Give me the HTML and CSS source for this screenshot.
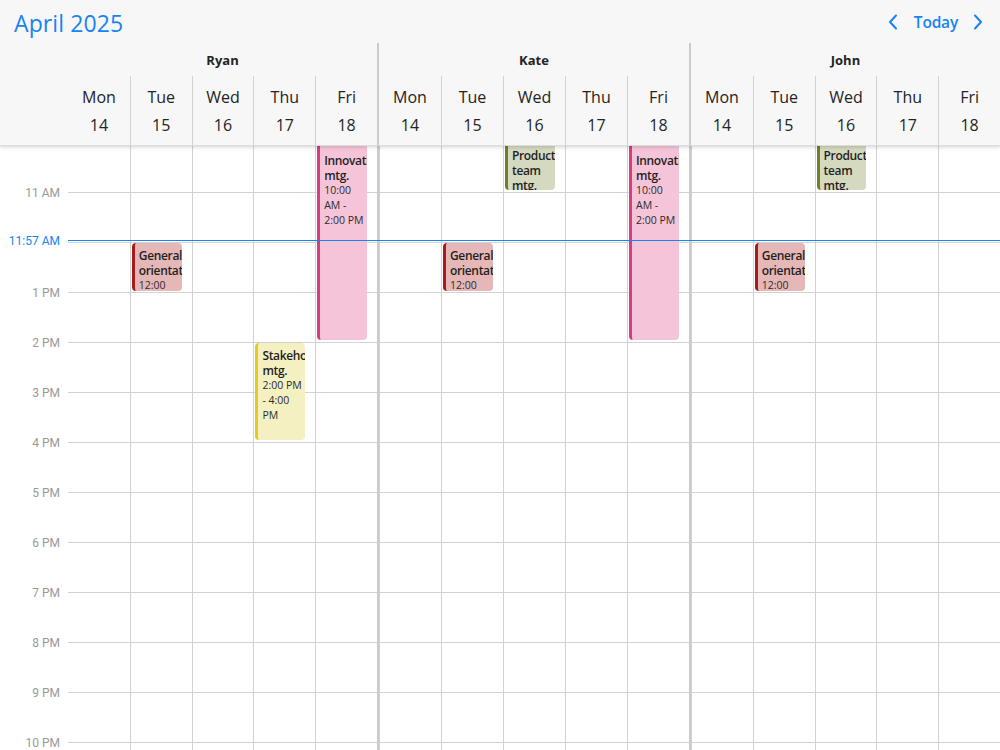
FILE: index.html
```html
<!DOCTYPE html>
<html lang="en">
<head>
<meta charset="utf-8">
<title>Scheduler</title>
<link rel="stylesheet" href="styles.css">
</head>
<body>
<div class="scheduler">
  <header class="header">
    <div class="toolbar">
      <div class="title">April 2025</div>
      <div class="nav">
        <button class="nav-btn" aria-label="Previous">
          <svg width="12" height="16" viewBox="0 0 12 16"><path d="M9 1.5 L3 8 L9 14.5" fill="none" stroke="currentColor" stroke-width="2" stroke-linecap="round" stroke-linejoin="round"/></svg>
        </button>
        <button class="today">Today</button>
        <button class="nav-btn" aria-label="Next">
          <svg width="12" height="16" viewBox="0 0 12 16"><path d="M3 1.5 L9 8 L3 14.5" fill="none" stroke="currentColor" stroke-width="2" stroke-linecap="round" stroke-linejoin="round"/></svg>
        </button>
      </div>
    </div>
    <div class="head-grid">
      <div class="corner"></div>
      <div class="group first">
        <div class="group-name">Ryan</div>
        <div class="days">
          <div class="day"><span>Mon</span><span>14</span></div>
          <div class="day"><span>Tue</span><span>15</span></div>
          <div class="day"><span>Wed</span><span>16</span></div>
          <div class="day"><span>Thu</span><span>17</span></div>
          <div class="day"><span>Fri</span><span>18</span></div>
        </div>
      </div>
      <div class="group">
        <div class="group-name">Kate</div>
        <div class="days">
          <div class="day"><span>Mon</span><span>14</span></div>
          <div class="day"><span>Tue</span><span>15</span></div>
          <div class="day"><span>Wed</span><span>16</span></div>
          <div class="day"><span>Thu</span><span>17</span></div>
          <div class="day"><span>Fri</span><span>18</span></div>
        </div>
      </div>
      <div class="group">
        <div class="group-name">John</div>
        <div class="days">
          <div class="day"><span>Mon</span><span>14</span></div>
          <div class="day"><span>Tue</span><span>15</span></div>
          <div class="day"><span>Wed</span><span>16</span></div>
          <div class="day"><span>Thu</span><span>17</span></div>
          <div class="day"><span>Fri</span><span>18</span></div>
        </div>
      </div>
    </div>
  </header>

  <main class="body">
    <div class="body-inner">
      <div class="times">
        <div class="hour"><span>11 AM</span></div>
        <div class="hour"><span class="hidden">12 PM</span></div>
        <div class="hour"><span>1 PM</span></div>
        <div class="hour"><span>2 PM</span></div>
        <div class="hour"><span>3 PM</span></div>
        <div class="hour"><span>4 PM</span></div>
        <div class="hour"><span>5 PM</span></div>
        <div class="hour"><span>6 PM</span></div>
        <div class="hour"><span>7 PM</span></div>
        <div class="hour"><span>8 PM</span></div>
        <div class="hour"><span>9 PM</span></div>
        <div class="hour"><span>10 PM</span></div>
        <div class="hour"><span>11 PM</span></div>
      </div>

      <div class="bgroup first">
        <div class="col"></div>
        <div class="col">
          <div class="appt red" style="top:100px;height:48px"><div class="a-title">General orientation</div><div class="a-time">12:00 PM - 1:00 PM</div></div>
        </div>
        <div class="col"></div>
        <div class="col">
          <div class="appt yellow" style="top:200px;height:97px"><div class="a-title">Stakeholder mtg.</div><div class="a-time">2:00 PM - 4:00 PM</div></div>
        </div>
        <div class="col">
          <div class="appt pink tall" style="top:0px;height:197px"><div class="a-title">Innovation mtg.</div><div class="a-time">10:00 AM - 2:00 PM</div></div>
        </div>
      </div>

      <div class="bgroup">
        <div class="col"></div>
        <div class="col">
          <div class="appt red" style="top:100px;height:48px"><div class="a-title">General orientation</div><div class="a-time">12:00 PM - 1:00 PM</div></div>
        </div>
        <div class="col">
          <div class="appt olive" style="top:0px;height:47px"><div class="a-title">Product team mtg.</div><div class="a-time">10:00 AM - 11:00 AM</div></div>
        </div>
        <div class="col"></div>
        <div class="col">
          <div class="appt pink tall" style="top:0px;height:197px"><div class="a-title">Innovation mtg.</div><div class="a-time">10:00 AM - 2:00 PM</div></div>
        </div>
      </div>

      <div class="bgroup">
        <div class="col"></div>
        <div class="col">
          <div class="appt red" style="top:100px;height:48px"><div class="a-title">General orientation</div><div class="a-time">12:00 PM - 1:00 PM</div></div>
        </div>
        <div class="col">
          <div class="appt olive" style="top:0px;height:47px"><div class="a-title">Product team mtg.</div><div class="a-time">10:00 AM - 11:00 AM</div></div>
        </div>
        <div class="col"></div>
        <div class="col"></div>
      </div>

      <div class="now-label">11:57 AM</div>
      <div class="now-line"></div>
    </div>
  </main>
</div>
</body>
</html>
```

FILE: styles.css
```css
* { box-sizing: border-box; }

html, body {
  margin: 0;
  padding: 0;
  width: 1000px;
  height: 750px;
  overflow: hidden;
  background: #ffffff;
  font-family: "Open Sans", "Noto Sans", "Liberation Sans", sans-serif;
  color: #242424;
}

.scheduler {
  width: 1000px;
  height: 750px;
  display: flex;
  flex-direction: column;
}

/* ---------- header ---------- */
.header {
  position: relative;
  z-index: 2;
  flex: 0 0 146px;
  background: #f7f7f7;
  box-shadow: 0 1px 4px rgba(0, 0, 0, 0.18);
  border-bottom: 1px solid #dcdcdc;
  display: flex;
  flex-direction: column;
}

.toolbar {
  height: 43px;
  display: flex;
  align-items: center;
  justify-content: space-between;
  padding: 0 14px 0 14px;
}

.title {
  font-size: 23px;
  color: #1784f4;
  letter-spacing: 0.1px;
  margin-top: 2px;
}

.nav {
  display: flex;
  align-items: center;
}

.nav-btn, .today {
  border: 0;
  background: transparent;
  color: #1784f4;
  font-family: inherit;
  padding: 0;
  cursor: pointer;
  display: flex;
  align-items: center;
}

.nav-btn { width: 16px; height: 20px; justify-content: center; }

.today {
  font-size: 15.5px;
  font-weight: 600;
  margin: 0 12px 0 13px;
  letter-spacing: -0.2px;
}

.head-grid {
  flex: 1;
  display: grid;
  grid-template-columns: 68px 309px 312px 311px;
}

.group {
  display: flex;
  flex-direction: column;
  border-left: 2px solid #cbcbcb;
}

.group.first { border-left: 0; }

.group-name {
  height: 33px;
  display: flex;
  align-items: center;
  justify-content: center;
  font-size: 13px;
  font-weight: 700;
  color: #242424;
}

.days {
  flex: 1;
  display: grid;
  grid-template-columns: repeat(5, 1fr);
}

.day {
  display: flex;
  flex-direction: column;
  align-items: center;
  padding-top: 7px;
  font-size: 16px;
  line-height: 28px;
  border-left: 1px solid #d2d2d2;
}

.day:first-child { border-left: 0; }

/* ---------- body ---------- */
.body {
  flex: 1;
  overflow: hidden;
  position: relative;
  z-index: 1;
}

.body-inner {
  position: relative;
  margin-top: -3px;
  display: grid;
  grid-template-columns: 68px 309px 312px 311px;
  height: 650px;
}

.times {
  display: flex;
  flex-direction: column;
}

.hour {
  height: 50px;
  flex: 0 0 50px;
  display: flex;
  align-items: flex-end;
  justify-content: flex-end;
  padding-right: 8px;
  font-family: Roboto, "Open Sans", sans-serif;
  font-size: 12px;
  color: #999999;
}

.hour span {
  line-height: 14px;
  margin-bottom: -7px;
}

.hour .hidden { visibility: hidden; }

.bgroup {
  display: grid;
  grid-template-columns: repeat(5, 1fr);
  border-left: 2px solid #cbcbcb;
}

.bgroup.first { border-left: 0; }

.col {
  position: relative;
  border-left: 1px solid #d2d2d2;
  background-image: repeating-linear-gradient(to bottom, transparent 0, transparent 49px, #d2d2d2 49px, #d2d2d2 50px);
}

.bgroup.first .col:first-child { border-left: 0; }

/* ---------- appointments ---------- */
.appt {
  position: absolute;
  left: 1px;
  width: calc(100% - 11px);
  border-left: 3px solid;
  border-radius: 4px;
  padding: 5px 0 0 4px;
  overflow: hidden;
  color: #1f1f1f;
}

.appt.tall { padding-top: 10px; }

.a-title {
  font-size: 12px;
  font-weight: 600;
  line-height: 15px;
  letter-spacing: -0.35px;
}

.a-time {
  font-size: 10.5px;
  line-height: 15px;
  color: #2b2b2b;
}

.red { background: #e6b7b7; border-left-color: #a61c1c; }
.pink { background: #f5c4d9; border-left-color: #d63f7f; }
.yellow { background: #f5f0c2; border-left-color: #e3cb22; }
.olive { background: #d5d9bf; border-left-color: #717f2d; }

/* ---------- current time ---------- */
.now-line {
  position: absolute;
  left: 68px;
  right: 0;
  top: 97px;
  height: 1px;
  background: #1784f4;
  z-index: 3;
}

.now-label {
  position: absolute;
  left: 0;
  width: 60px;
  top: 91px;
  text-align: right;
  font-family: Roboto, "Open Sans", sans-serif;
  font-size: 12px;
  line-height: 14px;
  color: #1784f4;
}
```
